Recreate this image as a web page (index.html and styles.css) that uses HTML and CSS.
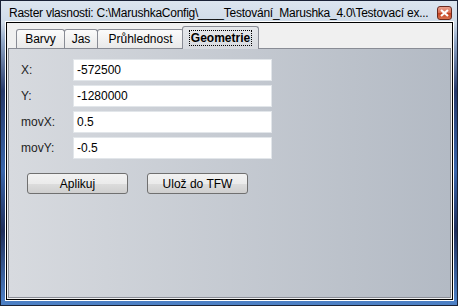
FILE: index.html
```html
<!DOCTYPE html>
<html lang="cs">
<head>
    <meta charset="UTF-8">
    <title>Raster vlasnosti</title>
    <link rel="stylesheet" href="styles.css">
</head>
<body>
    <div class="window">
        <div class="titlebar">
            <span class="title">Raster vlasnosti: C:\MarushkaConfig\____Testování_Marushka_4.0\Testovací ex...</span>
            <div class="close">
                <svg width="9" height="8" viewBox="0 0 9 8"><path d="M1 1 L8 7 M8 1 L1 7" stroke="#fff" stroke-width="2.2"/></svg>
            </div>
        </div>
        <div class="client">
            <div class="tabs">
                <div class="tab barvy">Barvy</div>
                <div class="tab jas">Jas</div>
                <div class="tab pruhl">Průhlednost</div>
                <div class="tab active"><span class="focus">Geometrie</span></div>
            </div>
            <div class="panel">
                <div class="row"><label>X:</label><div class="field">-572500</div></div>
                <div class="row"><label>Y:</label><div class="field">-1280000</div></div>
                <div class="row"><label>movX:</label><div class="field">0.5</div></div>
                <div class="row"><label>movY:</label><div class="field">-0.5</div></div>
                <div class="buttons">
                    <div class="btn">Aplikuj</div>
                    <div class="btn">Ulož do TFW</div>
                </div>
            </div>
        </div>
    </div>
</body>
</html>
```

FILE: styles.css
```css
body {
    margin: 0;
    font-family: "Segoe UI", "Liberation Sans", Arial, sans-serif;
    font-size: 12px;
    color: #000;
}
.window {
    width: 458px;
    height: 306px;
    box-sizing: border-box;
    border: 1px solid #1a2236;
    padding: 0 4px 5px 5px;
    display: flex;
    flex-direction: column;
    background: linear-gradient(to bottom, #dce5ef 0, #cfdbe8 22px, #93a9c8 40px, #26396a 90px, #3a66ab 170px, #1f2e5a 230px, #4c7fc4 300px);
}
.titlebar {
    height: 21px;
    display: flex;
    align-items: center;
    justify-content: space-between;
    padding-left: 3px;
    margin-right: 1px;
}
.title {
    white-space: nowrap;
    overflow: hidden;
    padding-top: 2px;
    letter-spacing: -0.25px;
}
.close {
    flex-shrink: 0;
    width: 15px;
    height: 14px;
    box-sizing: border-box;
    margin-top: 3px;
    border: 1px solid #6b2a1e;
    border-radius: 3px;
    background: linear-gradient(to bottom, #eba08c 0, #d8694f 50%, #c2401f 51%, #d9714f 100%);
    display: flex;
    align-items: center;
    justify-content: center;
}
.client {
    flex: 1;
    border: 1px solid #000;
    box-shadow: 0 0 0 1px #fff;
    background: #f0f0f0;
    padding: 0 1px 1px 1px;
    display: flex;
    flex-direction: column;
}
.tabs {
    height: 25px;
    display: flex;
    align-items: flex-end;
    padding-left: 8px;
    position: relative;
    z-index: 1;
}
.tab {
    height: 19px;
    box-sizing: border-box;
    padding-top: 2px;
    text-align: center;
    margin-right: -1px;
    border: 1px solid #898c95;
    border-bottom: none;
    border-radius: 3px 3px 0 0;
    background: linear-gradient(to bottom, #fbfbfb, #e9e9e9);
}
.barvy { width: 49px; }
.jas { width: 34px; }
.pruhl { width: 87px; }
.tab.active {
    width: 77px;
    height: 23px;
    margin-bottom: -1px;
    margin-left: -1px;
    padding-top: 4px;
    background: linear-gradient(to bottom, #e6e8eb, #d7dadf);
}
.focus {
    font-weight: bold;
    outline: 1px dotted #000;
    padding: 0 1px;
}
.panel {
    flex: 1;
    border: 1px solid #898c95;
    background: linear-gradient(to right, #d7dadf, #b3bac4);
    padding: 10px 12px 0 12px;
    display: flex;
    flex-direction: column;
    gap: 4px;
}
.row {
    display: flex;
    align-items: center;
    height: 22px;
}
.row label {
    width: 52px;
    color: #1e1e1e;
}
.field {
    width: 199px;
    height: 22px;
    box-sizing: border-box;
    background: #fff;
    border: 1px solid #e2e6ea;
    padding: 3px 3px 0 3px;
}
.buttons {
    display: flex;
    gap: 19px;
    margin-top: 10px;
    padding-left: 6px;
}
.btn {
    width: 101px;
    height: 21px;
    box-sizing: border-box;
    border: 1px solid #707070;
    border-radius: 3px;
    background: linear-gradient(to bottom, #f2f2f2 0, #ebebeb 50%, #dddddd 51%, #cfcfcf 100%);
    display: flex;
    align-items: center;
    justify-content: center;
}
```
